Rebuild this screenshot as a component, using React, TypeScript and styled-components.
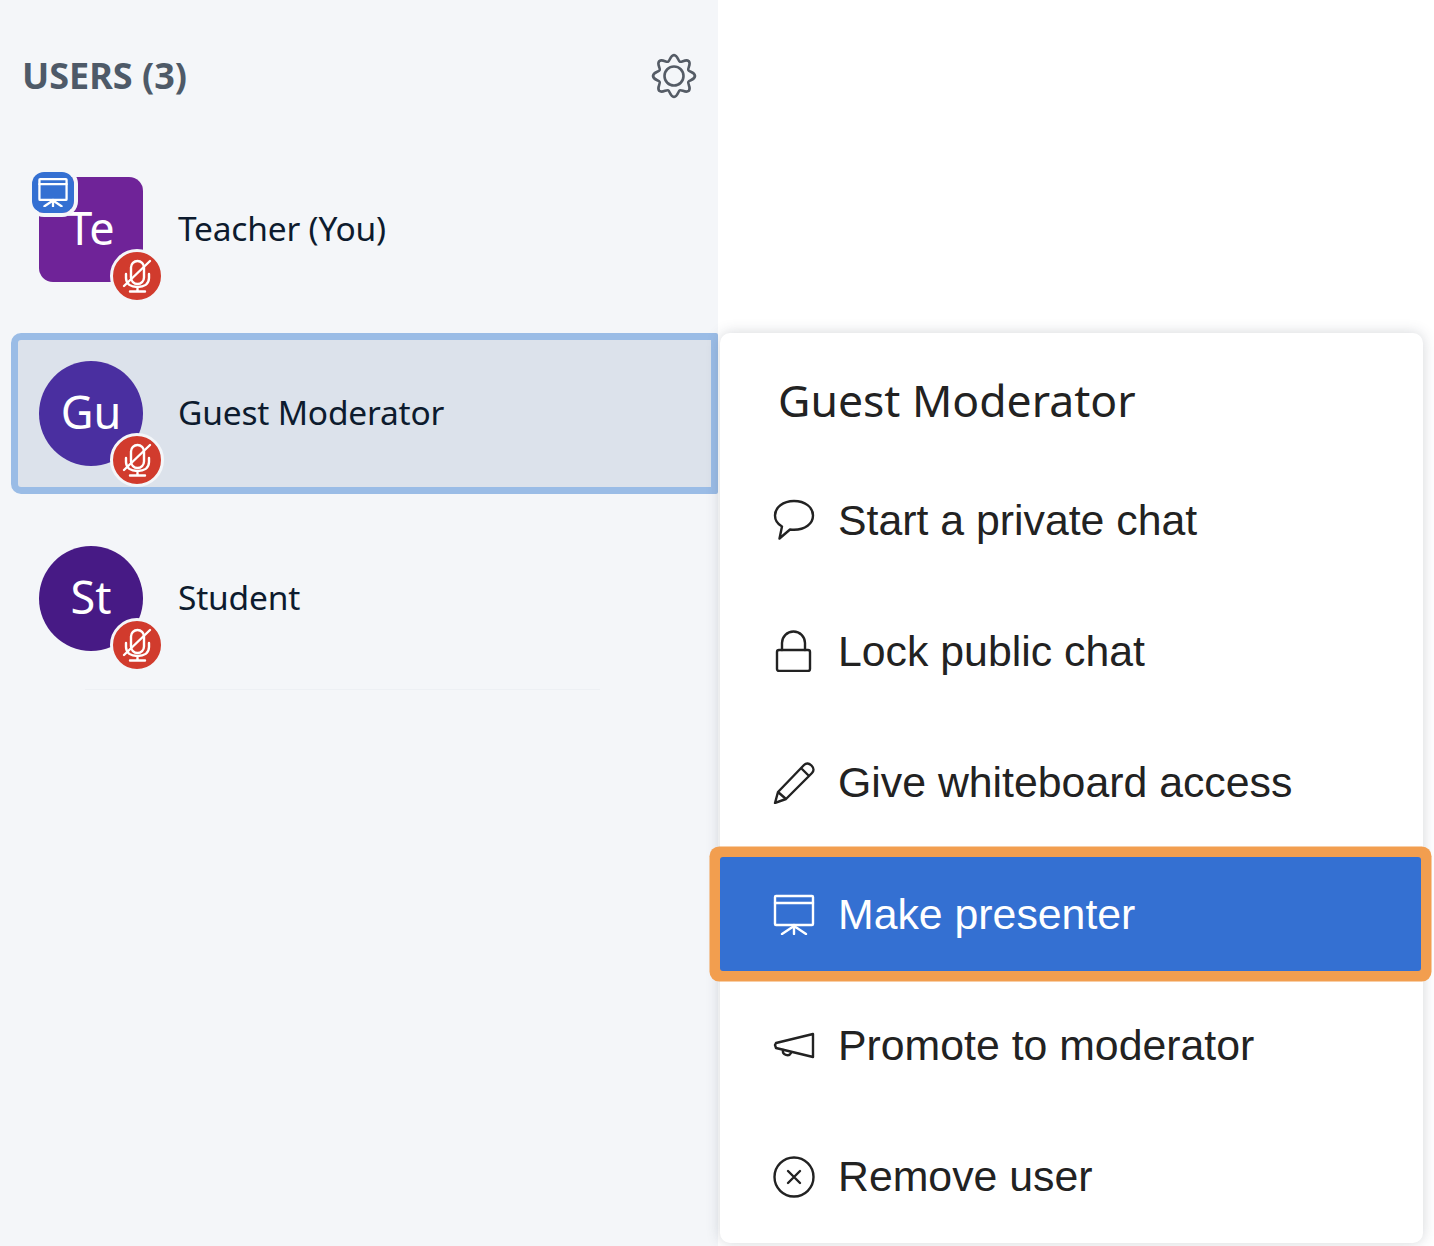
import React from 'react'
import styled, { createGlobalStyle } from 'styled-components'

const GlobalStyle = createGlobalStyle`
  html, body {
    margin: 0;
    padding: 0;
    background: #ffffff;
  }
`

const Page = styled.div`
  position: relative;
  width: 1434px;
  height: 1246px;
  overflow: hidden;
  background: #ffffff;
`

const Sidebar = styled.aside`
  width: 718px;
  height: 100%;
  background: #f4f6f9;
  font-family: 'Noto Sans', Lato, sans-serif;
`

const Header = styled.header`
  display: flex;
  align-items: center;
  justify-content: space-between;
  height: 148.7px;
  padding: 0 22px 0 22px;
  box-sizing: border-box;
`

const Heading = styled.h2`
  margin: 0 0 -2px;
  font-size: 36px;
  font-weight: 700;
  color: #4e5a68;
`

const GearIcon = styled.svg`
  width: 48px;
  height: 48px;
  margin: 3px -2px 0 0;
  fill: none;
  stroke: #555c66;
  stroke-width: 2.6;
  stroke-linejoin: round;
`

const UserList = styled.div`
  display: flex;
  flex-direction: column;
  gap: 23.5px;
  margin-left: 11px;
`

const UserRow = styled.div<{ $active?: boolean }>`
  display: flex;
  align-items: center;
  gap: 35px;
  height: 161px;
  box-sizing: border-box;
  padding-left: 21px;
  border: 7px solid ${({ $active }) => ($active ? '#9abce6' : 'transparent')};
  border-radius: 10px 2px 2px 10px;
  background: ${({ $active }) => ($active ? '#dce2eb' : 'transparent')};
`

const Avatar = styled.div<{ $color: string; $square?: boolean }>`
  position: relative;
  display: flex;
  align-items: center;
  justify-content: center;
  flex: none;
  width: 104px;
  height: 105px;
  box-sizing: border-box;
  padding-bottom: 4px;
  border-radius: ${({ $square }) => ($square ? '14px' : '50%')};
  background: ${({ $color }) => $color};
  color: #ffffff;
  font-size: 45px;
`

const MutedBadge = styled.span`
  position: absolute;
  right: -21px;
  bottom: -21px;
  display: flex;
  align-items: center;
  justify-content: center;
  width: 48px;
  height: 48px;
  border: 3px solid #f4f6f9;
  border-radius: 50%;
  background: #d13b2d;
`

const PresenterBadge = styled.span`
  position: absolute;
  left: -11px;
  top: -9px;
  display: flex;
  align-items: center;
  justify-content: center;
  width: 42px;
  height: 41px;
  border: 4px solid #f4f6f9;
  border-top-color: transparent;
  border-left-color: transparent;
  border-radius: 16px;
  background: #3470d2;
  background-clip: padding-box;
  color: #ffffff;
`

const UserName = styled.span`
  margin-bottom: 3px;
  font-size: 33.5px;
  letter-spacing: -0.2px;
  color: #0d1b2e;
`

const Divider = styled.div`
  width: 515px;
  height: 1px;
  margin: 10px 0 0 85px;
  background: #edf0f4;
`

const Menu = styled.div`
  position: absolute;
  left: 720px;
  top: 333px;
  width: 703px;
  height: 910px;
  box-sizing: border-box;
  padding-top: 33px;
  border-radius: 10px;
  background: #ffffff;
  box-shadow: 0 0 14px rgba(60, 70, 85, 0.22);
`

const MenuTitle = styled.h3`
  height: 97px;
  margin: 0 0 0 58px;
  font-family: 'Noto Sans', Lato, sans-serif;
  font-size: 44.5px;
  font-weight: 400;
  line-height: 68px;
  color: #222222;
`

const MenuList = styled.div`
  display: flex;
  flex-direction: column;
  gap: 17.4px;
`

const MenuItem = styled.div<{ $active?: boolean }>`
  display: flex;
  align-items: center;
  gap: 23px;
  height: 114px;
  margin-right: 2px;
  padding-left: 53px;
  border-radius: 3px;
  font-family: 'Liberation Sans', Arial, sans-serif;
  font-size: 42.8px;
  color: ${({ $active }) => ($active ? '#ffffff' : '#222222')};
  background: ${({ $active }) => ($active ? '#3470d2' : 'transparent')};
  box-shadow: ${({ $active }) => ($active ? '0 0 0 10.5px #f29e4f' : 'none')};
`

const IconSvg = styled.svg<{ $size?: number; $weight?: number }>`
  flex: none;
  width: ${({ $size }) => $size ?? 42}px;
  height: ${({ $size }) => $size ?? 42}px;
  fill: none;
  stroke: currentColor;
  stroke-width: ${({ $weight }) => $weight ?? 2.4};
  stroke-linecap: round;
  stroke-linejoin: round;
`

const polar = (deg: number, r: number) => {
  const rad = (deg * Math.PI) / 180
  return `${(24 + r * Math.cos(rad)).toFixed(2)} ${(24 + r * Math.sin(rad)).toFixed(2)}`
}

// wavy eight tooth outline, same shape as the sidebar settings gear
const gearPath = (() => {
  let d = `M${polar(-22.5, 15.5)}`
  for (let i = 0; i < 8; i++) {
    const a = i * 45
    d += `C${polar(a - 15, 15.5)} ${polar(a - 11, 21)} ${polar(a, 21)}`
    d += `C${polar(a + 11, 21)} ${polar(a + 15, 15.5)} ${polar(a + 22.5, 15.5)}`
  }
  return d + 'Z'
})()

function PresenterIcon({ size, weight }: { size?: number; weight?: number }) {
  return (
    <IconSvg viewBox="0 0 42 42" $size={size} $weight={weight}>
      <rect x="2" y="3" width="38" height="29" rx="1" />
      <path d="M2 10h38M21 32v9M21 33L9 41M21 33l12 8" />
    </IconSvg>
  )
}

function MicOff() {
  return (
    <svg width="30" height="34" viewBox="0 0 30 34" fill="none" stroke="#ffffff" strokeWidth="2.4" strokeLinecap="round">
      <rect x="9" y="2" width="13" height="23" rx="6.5" />
      <path d="M4 15v4c0 6 5 9 11.500 9S27 25 27 19v-4M15.500 28v4M8 32.500h15M2 27L28 2" />
    </svg>
  )
}

const menuEntries = [
  {
    label: 'Start a private chat',
    icon: <path d="M21 2C10 2 2 8.500 2 16.500c0 4.500 2.500 8.500 7 11l-2.500 12 10.500-9c1.300.2 2.600.3 4 .3 11 0 19-6 19-14.300S32 2 21 2z" />
  },
  {
    label: 'Lock public chat',
    icon: (
      <>
        <rect x="4" y="20" width="33" height="21" rx="2" />
        <path d="M9 20v-7a11.500 11.500 0 0 1 23 0v7" />
      </>
    )
  },
  {
    label: 'Give whiteboard access',
    icon: <path d="M2 41l3-11L31 3c2-2 5-2 7.500.5s2.500 5.500.5 7.500L13 37zM5 30l8 7M28 6l8 8" />
  }
]

const lowerEntries = [
  {
    label: 'Promote to moderator',
    icon: (
      <>
        <path d="M40 9v23L3 23l-1-3 1-2z" />
        <path d="M10 25c-1 5 6 7 8 3" />
      </>
    )
  },
  {
    label: 'Remove user',
    icon: (
      <>
        <circle cx="21" cy="21" r="19.500" />
        <path d="M15 15l12 12M27 15L15 27" />
      </>
    )
  }
]

const users = [
  { initials: 'Te', name: 'Teacher (You)', color: '#6f2398', square: true, presenter: true },
  { initials: 'Gu', name: 'Guest Moderator', color: '#4a2fa0', active: true },
  { initials: 'St', name: 'Student', color: '#471a85' }
]

export default function App() {
  return (
    <Page>
      <GlobalStyle />
      <Sidebar>
        <Header>
          <Heading>USERS (3)</Heading>
          <GearIcon viewBox="0 0 48 48">
            <path d={gearPath} />
            <circle cx="24" cy="24" r="9.500" />
          </GearIcon>
        </Header>
        <UserList>
          {users.map(user => (
            <UserRow key={user.name} $active={user.active}>
              <Avatar $color={user.color} $square={user.square}>
                {user.initials}
                {user.presenter && (
                  <PresenterBadge>
                    <PresenterIcon size={30} weight={3.2} />
                  </PresenterBadge>
                )}
                <MutedBadge>
                  <MicOff />
                </MutedBadge>
              </Avatar>
              <UserName>{user.name}</UserName>
            </UserRow>
          ))}
        </UserList>
        <Divider />
      </Sidebar>
      <Menu>
        <MenuTitle>Guest Moderator</MenuTitle>
        <MenuList>
          {menuEntries.map(entry => (
            <MenuItem key={entry.label}>
              <IconSvg viewBox="0 0 42 42">{entry.icon}</IconSvg>
              {entry.label}
            </MenuItem>
          ))}
          <MenuItem $active>
            <PresenterIcon />
            Make presenter
          </MenuItem>
          {lowerEntries.map(entry => (
            <MenuItem key={entry.label}>
              <IconSvg viewBox="0 0 42 42">{entry.icon}</IconSvg>
              {entry.label}
            </MenuItem>
          ))}
        </MenuList>
      </Menu>
    </Page>
  )
}
